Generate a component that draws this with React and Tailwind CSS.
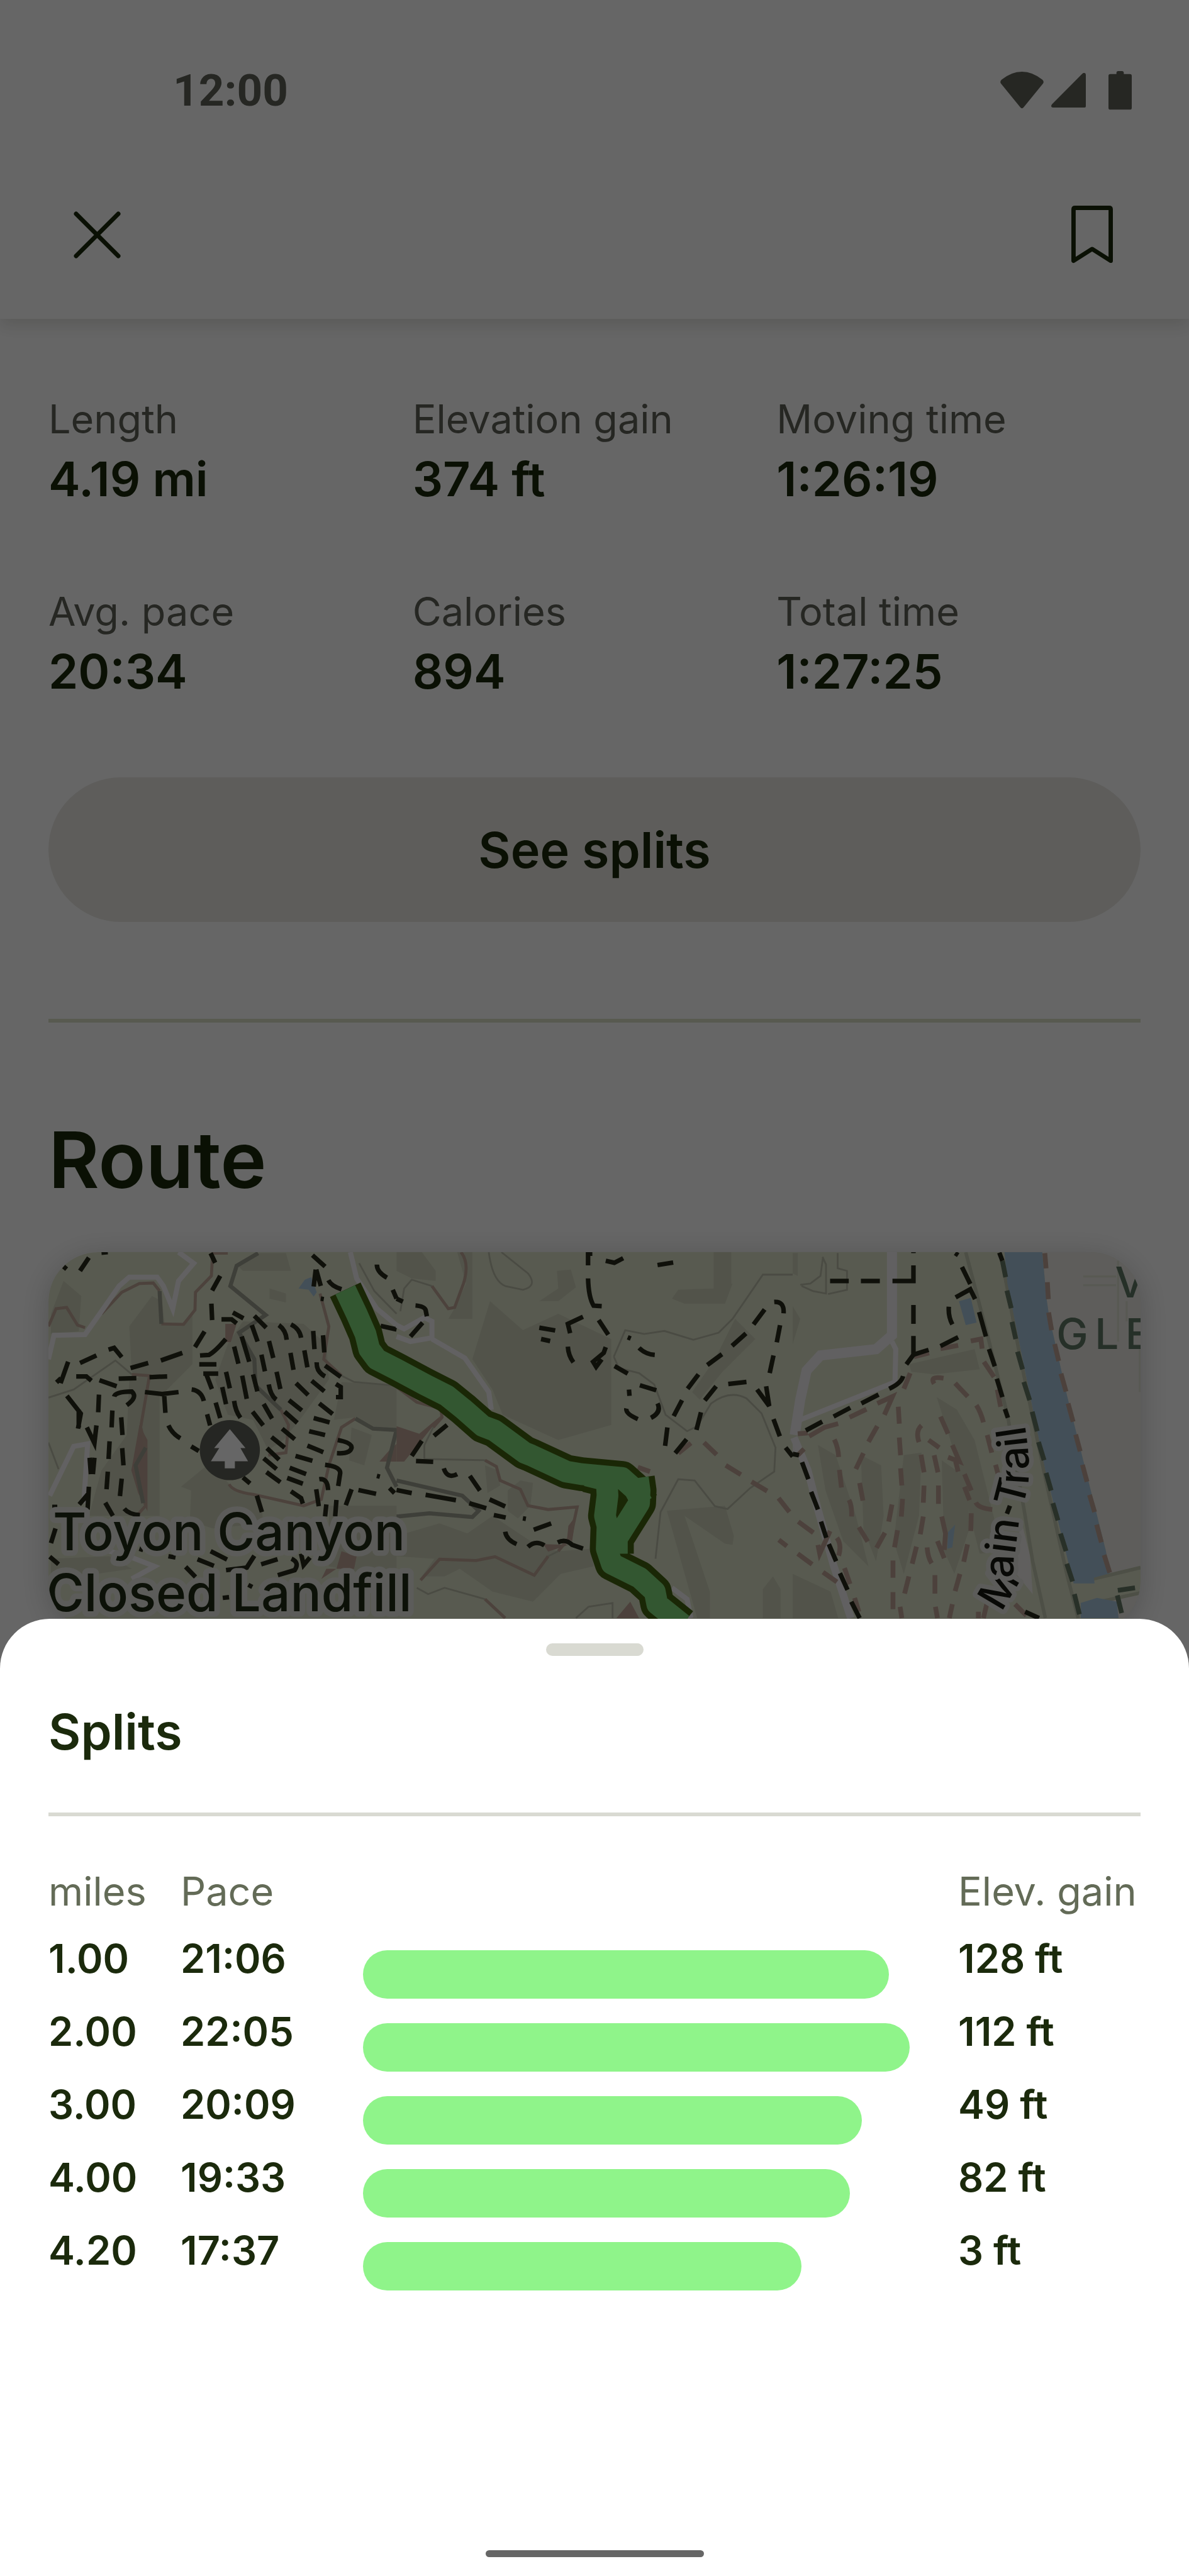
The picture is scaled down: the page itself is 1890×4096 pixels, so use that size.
const STATS = [
  { label: "Length", value: "4.19 mi" },
  { label: "Elevation gain", value: "374 ft" },
  { label: "Moving time", value: "1:26:19" },
  { label: "Avg. pace", value: "20:34" },
  { label: "Calories", value: "894" },
  { label: "Total time", value: "1:27:25" },
];

const SPLITS = [
  { miles: "1.00", pace: "21:06", gain: "128 ft", bar: 96.2 },
  { miles: "2.00", pace: "22:05", gain: "112 ft", bar: 100 },
  { miles: "3.00", pace: "20:09", gain: "49 ft", bar: 91.2 },
  { miles: "4.00", pace: "19:33", gain: "82 ft", bar: 89.1 },
  { miles: "4.20", pace: "17:37", gain: "3 ft", bar: 80.2 },
];

// The map is drawn as three tiles, each 1568 units wide.
const WEST = {
  shade:
    "M250 170L320 230L310 370L200 380V300ZM640 250L650 340H720L760 290V500L640 620L520 530L510 350L600 230ZM940 110L1020 60H1130L1150 130H960ZM1065 200L1130 220L1130 255L1065 240ZM900 420L960 330L1200 340L1290 420L1300 560L1200 700L1120 800L1060 840L1000 720L900 700L850 560ZM1350 570L1568 585V760L1480 750L1400 710L1320 720ZM510 560L585 545L630 620V1100H350L400 920L500 780ZM830 890L920 990L1030 1020L1040 1130L840 1150L750 1120L755 1000L715 985ZM200 1270L430 1260L520 1310L380 1330H200ZM1300 1060H1568V1400L1450 1330L1300 1300ZM1390 750L1470 780L1440 900L1380 880Z",
  earth:
    "M890 340H935L912 412H890ZM550 740L582 800V1082L545 1010L518 920ZM1568 815L1540 840L1500 885H1568ZM1350 1240L1410 1260L1400 1310H1330ZM1290 1310H1330L1270 1350Z",
  water: "M1230 155L1205 165L1180 200L1220 205L1240 232L1252 215L1240 180Z",
  roads:
    "M190 480L212 385L335 382L400 290L470 190L510 155H620L645 190L682 280L705 170L765 100L705 56M195 1020L290 825L345 815L330 1050M1385 56L1410 160L1490 280L1568 345M430 1240L520 1265L610 1300L520 1350",
  brown:
    "M190 350L220 280L262 275L305 345L335 355M400 300L480 215L550 180L605 178L630 210M637 340L725 342L770 285L772 215L835 150L840 60H900M520 540L590 545L555 750L575 830L530 900L575 1060L530 1110M1110 680L1140 740L1130 850L1060 860M1265 220L1300 350L1280 480L1350 545M905 975Q920 1005 1000 1015L1200 1060L1270 1035L1300 900L1350 750L1405 715",
  grey:
    "M630 210L637 340M1020 60L935 110L910 190L1050 305L945 375L1005 480L1010 585L1110 680M1405 715L1475 755L1568 760L1530 910L1568 985M575 830L535 900L565 1050",
  thin:
    "M190 632L290 600L455 485L520 540M1350 545L1400 570L1568 585M190 810L230 915M1420 100L1480 210L1568 300",
  trails:
    "M315 130L350 78M250 113L262 123M400 58L425 56M832 60L850 98M870 150L838 208M835 260L838 325M808 370L770 432M892 400Q850 450 825 463L790 465M787 500H855M635 485L720 455M515 515L585 495M428 442L450 435L480 472M315 495L380 465M268 490L238 575M222 572L240 555M300 548H340L360 565M392 563L460 587M468 557L538 555M590 551L660 548M450 628Q455 608 520 608Q545 630 500 662M572 610L640 618L705 610M648 620L653 692M263 625L318 695L307 755M310 680V750M390 620L387 690M443 683L440 750M478 710L483 780M342 750L372 812L380 742M432 805L428 875M482 832L487 900M353 870L358 935M372 870L366 935M425 925L420 995M480 953L473 1022M350 985L345 1075M350 1010L312 1055M205 1065H225M415 1048L445 1100M490 1072Q510 1095 552 1097M218 1150L200 1208M195 1262L230 1292M665 742Q680 775 712 793M755 825L785 843M757 600Q795 605 805 645M875 322H915L935 338M920 295L962 318M1005 308L1052 355M995 345L1018 410M955 390L985 490M925 430L942 498M1063 408L1080 475M1033 462L1047 528M1102 345Q1130 365 1133 403M1150 342Q1185 360 1190 395M1238 368L1243 440M1277 385L1282 453M1148 455L1160 522M1203 445L1215 512M1252 492Q1250 530 1285 548M1285 505L1347 550M893 530L908 595M803 537H862M815 540L837 598M957 545L975 637M1000 540L1017 607M1093 530L1108 598M878 590L893 658M1062 580Q1070 625 1092 640M1170 575L1218 622M1232 565L1282 607M1328 578L1347 590V630H1328M852 652L870 713M925 645Q930 685 950 712M1042 657L1075 715M998 688L1040 742M1142 642L1193 683M1262 655L1315 697M818 698L830 742M1125 688L1175 732M1240 713L1303 730M1222 765L1285 780M1115 755L1165 797M1073 788L1125 830M1215 822L1278 848M1055 832L1103 878M1168 863L1235 882M1042 872L1093 915M1145 910L1210 935M1053 927L1108 967M1135 950L1197 973M1150 1003L1190 1030L1197 1052M1262 955Q1295 950 1297 998M1285 898Q1345 905 1345 930L1337 982M1335 800Q1390 810 1390 830Q1385 855 1332 852M1250 995L1260 1062M1290 1055L1285 1102M1330 1037L1325 1102M1390 995L1367 1058M1417 998L1487 1013M1540 990L1560 1010M1490 942L1502 945M960 948L988 972M1015 1020L1035 1085M1235 68L1285 113M1248 125L1240 192M1250 125L1268 190M1298 167Q1310 190 1350 203M1268 240L1280 242M1490 105Q1490 135 1530 157M1553 205L1568 240M1505 348L1568 362M832 1240L897 1273M780 1272L845 1298M733 1302L772 1342M665 1260L693 1265M893 1315L975 1305L1005 1258M1032 1292L1097 1272M1152 1270Q1185 1285 1165 1315L1098 1335M1190 1250L1200 1295L1225 1265M550 1230L565 1235M985 1385L993 1370M880 1425L905 1422",
};

const CENTER = {
  shade:
    "M0 56H100L155 130V170L60 160L0 130ZM240 56H300V320H205L235 270L275 180ZM635 130L690 125L710 195L640 250H565L640 200ZM1255 56H1325V180L1255 220ZM1115 205L1255 200L1330 180L1300 260H1140L1090 240ZM450 635L545 630L580 675H465ZM370 250L500 365L640 300L850 400V740L640 800L420 700L380 600L300 480ZM350 900L400 920L410 980L360 1010ZM440 1000L490 960L540 970L530 1060L480 1110L440 1080ZM170 1130L280 1170L380 1100L560 1220L640 1240L770 1230L780 1300L650 1330L540 1440L380 1400L250 1310L190 1340L100 1340L150 1270L0 1260V1180ZM1070 1080L1300 1060L1335 1180L1330 1215L1300 1210L1140 1100L1240 1400V1505H1190ZM1340 320L1420 400L1290 530L1200 640L1170 610L1260 480ZM1490 1340L1520 1390V1505H1450V1390Z",
  earth:
    "M0 745L90 775L180 700L100 800L30 885H0ZM580 1212L680 1215L600 1242ZM925 1440L960 1505H870ZM680 1140L710 1100L695 1200L675 1190Z",
  roads:
    "M0 345L30 360L110 315L140 330V395L55 410L0 390M140 400L270 475L365 610L375 680M1090 1385L1150 1430L1165 1505",
  brown:
    "M255 56Q290 100 265 180L230 275L205 280L140 190M0 590L80 650L175 675L180 710L145 750M350 880L395 905L410 960L490 995L520 1060L600 1075L715 1065L690 1180L640 1240M600 1260L545 1335L390 1262L315 1277L170 1272L95 1355M350 1430L430 1505",
  grey: "M0 960L260 1020L325 1080L300 1105L130 1090L0 1103",
  thin:
    "M140 190L60 165L30 200L15 290M365 56Q380 170 430 190L500 205Q560 190 520 140L415 56M860 470L905 365L980 380L1060 368L1175 403L1275 375L1330 320L1450 145H1568M860 470L880 515L960 535L1020 580L1065 700L1150 765L1190 745L1245 655Q1320 600 1385 635L1445 695L1500 830L1495 925L1400 990L1310 1073L1260 1062L1180 960L1115 955L1045 1085L1025 1270M145 750L110 820V875L350 880M640 1240L600 1260M80 1385L125 1410L190 1385L350 1430M710 1505L760 1460L855 1445V1505",
  trails:
    "M0 240L25 252M75 267Q110 270 115 285L120 310M103 335L55 390M758 108V62H775M828 90L862 98L897 80M1033 107L1095 97M758 160Q760 235 780 268L812 270M738 312L678 340L687 377M565 355L628 366M572 400L608 408M800 325L838 383M678 430Q680 465 700 492M828 432L820 455L778 490L790 510L812 480M915 393L927 398M960 435Q985 460 1022 463M863 507L915 537M963 583L1028 603M920 600L922 625M910 675Q905 695 955 717M1033 655Q1050 690 1007 712M1457 283L1413 342M1383 378L1328 427M1288 460L1230 503M1195 540L1152 597M1130 642L1097 705M1072 750L1063 823M1495 253Q1535 250 1532 298M1518 345L1505 413M1492 465L1477 535M1313 578L1385 570M1265 587L1220 643M1205 690L1187 760M1148 797L1103 852M1427 600L1475 665L1463 587M1492 717L1517 785M1540 830L1568 865M200 740L148 783M100 803L60 863M77 883L145 886M187 912Q200 955 240 935M290 942L330 1000M0 998L60 1010M115 1017L235 1038M288 1050L355 1070M368 1035L430 1063M385 1097L432 1107M500 1110L512 1112M543 1155L612 1130M430 1163Q435 1195 475 1212M520 1223Q550 1195 585 1217M638 1205Q670 1190 695 1215L738 1230",
  bridle:
    "M1165 812L1115 852M1217 810L1267 858M1303 900L1363 937M1405 965L1467 1002M1512 1030L1555 1085M1513 1195L1545 1220M955 908L1003 925",
};

const EAST = {
  shade:
    "M460 500L720 440L740 520L560 540L470 530ZM570 630L650 680L720 800L790 1080L830 1240L740 1250L690 1050L640 850ZM270 860L350 900L360 1100L330 1280L280 1150ZM440 860L510 850L500 1100L440 1330L400 1200ZM590 880L690 950L700 1150L640 1330L600 1240ZM100 820L170 860L250 1100L300 1300L200 1200L130 1000ZM0 1330L150 1400L180 1505H0ZM0 60H20V150L0 140ZM0 270L30 320L0 420Z",
  water:
    "M658 250L705 237L728 335L685 345ZM643 1135L632 1225L612 1230L615 1165Z",
  river:
    "M838 56H988L1005 240L1015 310L1085 620L1240 1240L1255 1328L1192 1345L1195 1368H1112L1000 920L900 430L850 180ZM1140 1445L1205 1425L1283 1440L1290 1505H1140Z",
  town: "M988 56H1377V1300L1255 1328L1240 1240L1085 620L1015 310L1005 240ZM1225 1438L1377 1405V1505H1290L1283 1440Z",
  plaza: "M905 1120L940 1260L950 1410L885 1330V1230ZM0 800L25 840L0 860Z",
  bank:
    "M685 56L770 380L850 700L915 1070L950 1280L1000 1505M840 150L900 470L1000 950L1085 1330L1130 1505M1190 1350L1377 1305M1225 1438L1377 1405",
  grid: "M1150 152H1280M1150 187H1280M1288 90V410M1322 250V330M1374 440V610",
  thin:
    "M118 75L132 105V220L80 210L35 190M178 60V120L215 130V205L140 222M30 185L70 180L110 150L120 75",
  mainRoad: "M393 56V385L330 440L110 465L55 525L30 640L8 780",
  roads: "M393 410L408 440L405 570L30 720",
  lane: "M5 790L60 920L100 1075L160 1290L230 1505",
  trails:
    "M148 170H222M270 170H345M395 170H478V108M478 56V60M478 265V340M478 388V462L450 500M478 462L538 443M585 428L655 393M437 547Q430 575 382 597M340 620L272 655M228 672L162 707M117 727L52 762M0 855L25 860M37 888L62 955M73 1005L100 1075M112 1123L133 1187M143 1212L172 1280M187 1327L217 1393M232 1440L265 1505M643 60L655 68M670 115L703 182M645 235L703 203L722 242M618 272Q615 310 632 342M738 293L765 390M777 440L800 508M808 557L830 630M840 677L852 712M818 58L830 90M848 1092L860 1060M920 1480L975 1505",
  creek:
    "M830 90L843 155M848 208L865 278M868 332L883 400M890 450L910 520M915 570L938 642M948 688L968 765M973 808L995 880M1003 930L1023 1000M1030 1050L1050 1118M1060 1170L1082 1240M1085 1290L1108 1360M1115 1410L1135 1490M1287 1395L1355 1385M1285 1415L1302 1485",
  bridle:
    "M998 60L1003 120M1008 175L1012 242M1013 295L1025 365M1037 420L1053 487M1062 537L1082 608M1090 655L1110 728M1120 778L1138 845M1147 898L1165 965M1175 1017L1195 1085M1203 1135L1222 1205M1233 1255L1255 1325M705 408L745 400L750 438M585 438L655 425M480 470L540 455M440 597L465 535M335 655L395 628L363 700M225 710L292 678M65 785L125 750L180 735M20 775L60 772M165 798Q180 830 182 867M335 745L300 807M418 668L422 735M422 790L427 860M427 912L432 980M435 1033L430 1103M415 1157L403 1225M397 1277V1345M397 1402V1470M280 852L250 915M265 970L278 1040M185 918L193 988M223 1037Q235 1060 233 1103M262 1145L297 1202M393 1055L380 1123M365 1167L332 1227M560 577Q540 545 597 555M643 575L693 628M727 662Q745 690 755 730M585 707L615 775M632 820L660 885L615 868M770 780L788 850M803 898L820 960M757 490L797 550M810 600L823 668M510 742Q485 765 500 808M538 800L580 830M508 858L520 928M560 860L575 928M645 885L655 925M680 935L707 1000M680 985L700 1038M520 980L517 1048M577 980V1053M725 1047Q735 1070 790 1075M707 1090L705 1160M517 1103L505 1173M590 1103L605 1170L600 1235M490 1222L473 1290M532 1225Q535 1265 550 1288M573 1200L600 1268M692 1213L677 1282M460 1340L443 1408M563 1335V1408M662 1330L643 1398M425 1460L432 1505M565 1460L573 1505M632 1450L620 1505M755 1395L750 1430M768 1450L755 1505M735 1480V1505M22 1123L82 1167M20 1250L77 1292M120 1323L175 1362M100 1215L107 1250L148 1160M175 1187Q195 1215 182 1258M205 1307L227 1370M245 1425L262 1480M880 1450L925 1495M45 835L20 860",
};

const ROUTE =
  "M1365 205L1410 300L1445 380L1460 440L1490 480L1568 520L1680 580L1768 625L1830 675L1910 745L1955 762L2075 850L2100 860L2240 925L2300 935L2460 950L2510 995L2540 1050M2320 940L2400 960L2403 1020L2393 1100L2403 1140L2400 1230L2420 1290L2530 1345L2590 1400L2600 1450L2700 1530M2523 950L2530 1000L2528 1050L2440 1190L2440 1250";

function Tile({ x, tile }) {
  return (
    <g transform={`translate(${x} 0)`} fill="none">
      <path d={tile.shade} fill="#c3c8b0" fillOpacity="0.65" />
      <path d={tile.earth} fill="#bfa496" />
      <path d={tile.plaza} fill="#efeeec" />
      <path d={tile.town} fill="#eae9e4" />
      <path d={tile.water} fill="#a8c6dc" />
      <path d={tile.grid} stroke="#dcdfcf" strokeWidth="8" />
      <path d={tile.bank} stroke="#c0c6ae" strokeWidth="14" />
      <path d={tile.river} fill="#a8c6dc" />
      <path d={tile.thin} stroke="#b9bba8" strokeWidth="7" />
      <path d={tile.brown} stroke="#bda597" strokeWidth="12" />
      <path d={tile.grey} stroke="#9c9d8f" strokeWidth="16" />
      <path d={tile.roads} stroke="#f4f2f4" strokeWidth="20" />
      <path d={tile.mainRoad} stroke="#f2f0f2" strokeWidth="40" />
      <path d={tile.lane} stroke="#f2f0f2" strokeWidth="30" />
      <path d={tile.bridle} stroke="#bfa496" strokeWidth="19" />
      <path d={tile.creek} stroke="#647864" strokeWidth="19" />
      <path d={tile.trails} stroke="#26281a" strokeWidth="18" />
    </g>
  );
}

function RouteMap() {
  return (
    <svg
      viewBox="190 56 4323 1500"
      className="block w-full"
      role="img"
      aria-label="Route map"
      fontFamily="Inter, sans-serif"
    >
      <rect x="190" y="56" width="4323" height="1500" fill="#dce0c8" />
      <Tile x={0} tile={WEST} />
      <Tile x={1568} tile={CENTER} />
      <Tile x={3136} tile={EAST} />

      <path d={ROUTE} fill="none" stroke="#43620f" strokeWidth="134" strokeLinejoin="round" />
      <path d={ROUTE} fill="none" stroke="#7fda7c" strokeWidth="86" strokeLinejoin="round" />

      <circle cx="908" cy="840" r="119" fill="#5e6057" />
      <path
        d="M908 757L970 832H950L980 884H928V912H888V884H833L866 832H846Z"
        fill="#ffffff"
      />

      <g
        fill="#202c14"
        stroke="#e6e6e0"
        strokeWidth="44"
        strokeLinejoin="round"
        paintOrder="stroke"
        fontSize="204"
        fontWeight="500"
        textAnchor="middle"
      >
        <text x="905" y="1237">Toyon Canyon</text>
        <text x="905" y="1479">Closed Landfill</text>
      </g>

      <path
        id="main-trail"
        d="M3962 1482L4014 1395Q4008 1350 4010 1300L4030 1140L4056 1030Q4072 970 4071 920Q4070 800 4040 660"
        fill="none"
      />
      <text
        fill="#16180f"
        stroke="#e6e6e0"
        strokeWidth="36"
        strokeLinejoin="round"
        paintOrder="stroke"
        fontSize="164"
        fontWeight="500"
      >
        <textPath href="#main-trail">Main Trail</textPath>
      </text>

      <g fill="#5f7864" fontSize="168" fontWeight="500">
        <text x="4412" y="235">V</text>
        <text x="4180" y="440" letterSpacing="26">GLE</text>
      </g>
    </svg>
  );
}

function StatusIcons() {
  return (
    <div className="flex items-center text-[#5f6158]">
      <svg viewBox="0 0 70 60" className="w-[69px]" fill="currentColor" aria-hidden="true">
        <path d="M2 13Q18 0 35 0T68 13Q71 16 69 19L38 57Q35 61 32 57L1 19Q-1 16 2 13Z" />
      </svg>
      <svg viewBox="0 0 56 56" className="ml-3 w-[55px]" fill="currentColor" aria-hidden="true">
        <path d="M50 1.500Q52 -0.500 54 0Q56 0.500 56 3V54Q56 56 54 56H3Q0 56 0 53.500Q0 52 1.500 50.500Z" />
      </svg>
      <svg viewBox="0 0 38 63" className="ml-9 w-[37px]" fill="currentColor" aria-hidden="true">
        <path d="M13 5V3Q13 0 16 0H22Q25 0 25 3V5H35Q38 5 38 8V60Q38 63 35 63H3Q0 63 0 60V8Q0 5 3 5Z" />
      </svg>
    </div>
  );
}

function Header() {
  return (
    <header className="relative bg-white pt-[91px] pb-[34px] shadow-[0_10px_24px_rgba(40,45,20,0.14)]">
      <div className="flex h-[106px] items-center justify-between pr-[91px] pl-[275px]">
        <span className="font-[Roboto,sans-serif] text-[71px] font-bold text-[#5f6158]">
          12:00
        </span>
        <StatusIcons />
      </div>
      <nav className="mt-[76px] flex h-[200px] items-center justify-between pr-[121px] pl-[117px]">
        <button type="button" aria-label="Close">
          <svg viewBox="0 0 76 76" className="w-[75px]" fill="none" stroke="currentColor" strokeWidth="7" strokeLinecap="round">
            <path d="M4 4L72 72M72 4L4 72" />
          </svg>
        </button>
        <button type="button" aria-label="Save">
          <svg viewBox="0 0 67 93" className="w-[66px]" fill="none" stroke="currentColor" strokeWidth="7" strokeLinejoin="round">
            <path d="M3.500 6Q3.500 3.500 6 3.500H61Q63.500 3.500 63.500 6V89L33.500 70L3.500 89Z" />
          </svg>
        </button>
      </nav>
    </header>
  );
}

function SplitsSheet() {
  return (
    <section
      aria-labelledby="splits-title"
      className="absolute inset-x-0 bottom-0 flex flex-col rounded-t-[79px] bg-white px-[77px] pt-[39px] pb-[30px]"
    >
      <div className="h-5 w-[155px] self-center rounded-full bg-[#d9dad2]" />
      <h2 id="splits-title" className="mt-[68px] text-[79px] leading-[104px] font-semibold">
        Splits
      </h2>
      <hr className="mt-[77px] border-t-[6px] border-[#d9dad2]" />

      <table className="mt-[76px] mb-[404px] w-full table-fixed text-left text-[63px] leading-[86px]">
        <thead className="text-[#636b57]">
          <tr className="h-[107px] align-top">
            <th className="w-[210px] font-normal">miles</th>
            <th className="w-[290px] font-normal">Pace</th>
            <th aria-label="Pace bar" />
            <th className="w-[290px] font-normal whitespace-nowrap">Elev. gain</th>
          </tr>
        </thead>
        <tbody>
          {SPLITS.map((split) => (
            <tr key={split.miles} className="h-[116px] align-top font-semibold">
              <td>{split.miles}</td>
              <td>{split.pace}</td>
              <td className="pt-[30px] pr-[77px]">
                <div
                  className="h-[77px] rounded-full bg-[#8ff48a]"
                  style={{ width: `${split.bar}%` }}
                />
              </td>
              <td>{split.gain}</td>
            </tr>
          ))}
        </tbody>
      </table>

      <div className="h-[11px] w-[347px] self-center rounded-full bg-[#666666]" />
    </section>
  );
}

export default function App() {
  return (
    <div className="relative min-h-screen overflow-hidden bg-white font-[Inter,sans-serif] text-[#1b2a0c]">
      <Header />

      <main className="px-[77px] pt-[116px]">
        <dl className="grid grid-cols-3 gap-y-[116px]">
          {STATS.map((stat) => (
            <div key={stat.label}>
              <dt className="text-[63px] leading-[86px] text-[#5f6158]">{stat.label}</dt>
              <dd className="text-[76px] leading-[104px] font-semibold">{stat.value}</dd>
            </div>
          ))}
        </dl>

        <button
          type="button"
          className="mt-[117px] h-[230px] w-full rounded-full bg-[#eae9e4] text-[79px] font-semibold"
        >
          See splits
        </button>

        <hr className="mt-[154px] border-t-[6px] border-[#dce0c8]" />

        <h1 className="mt-[143px] text-[124px] leading-[150px] font-semibold">Route</h1>

        <div className="mt-[72px] overflow-hidden rounded-[79px] shadow-[0_8px_48px_rgba(0,0,0,0.2)]">
          <RouteMap />
        </div>
      </main>

      <div className="absolute inset-0 bg-black/60" />
      <SplitsSheet />
    </div>
  );
}
